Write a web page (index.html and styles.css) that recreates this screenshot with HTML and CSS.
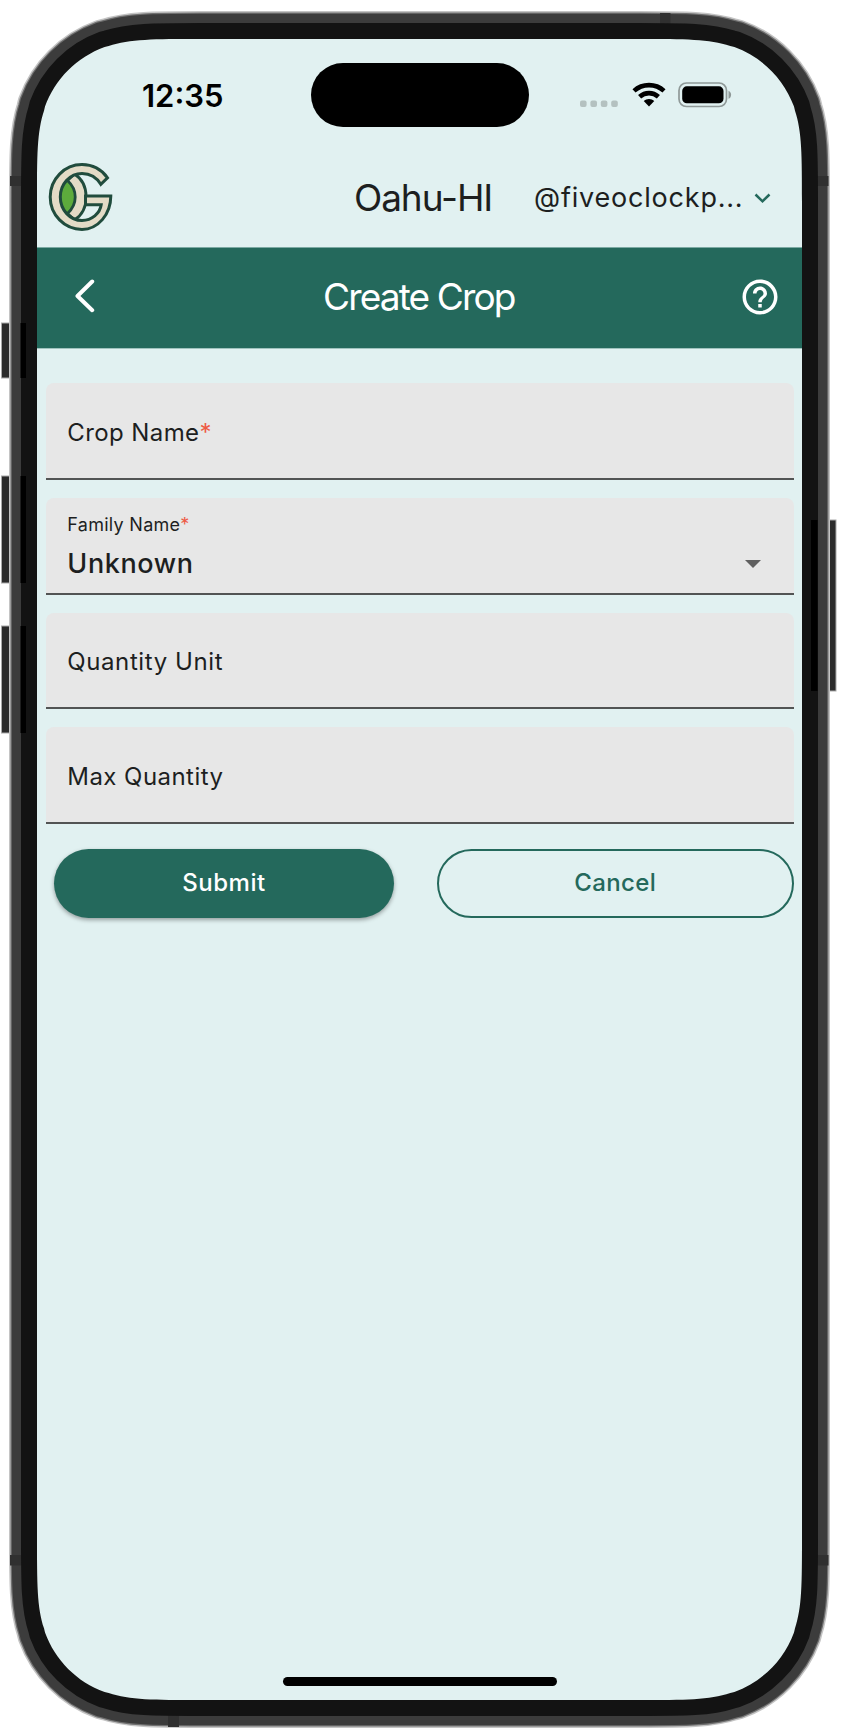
FILE: index.html
```html
<!DOCTYPE html>
<html lang="en">
<head>
<meta charset="utf-8">
<title>Create Crop</title>
<link rel="stylesheet" href="styles.css">
</head>
<body>
<div class="device">
  <svg class="frame" viewBox="0 0 849 1732" aria-hidden="true">
    <defs>
      <path id="outline" d="M0 163.6C0 116.5 0 92.9 7 71.7L8 67.6C18.1 39.9 39.9 18.1 67.6 8L71.7 7C92.9 0 116.5 0 163.6 0L601.4 0C648.5 0 672.1 0 693.3 7L697.4 8C725.1 18.1 746.9 39.9 757 67.6L758 71.7C765 92.9 765 116.5 765 163.6L765 1497.4C765 1544.5 765 1568.1 758 1589.3L757 1593.4C746.9 1621.1 725.1 1642.9 697.4 1653L693.3 1654C672.1 1661 648.5 1661 601.4 1661L163.6 1661C116.5 1661 92.9 1661 71.7 1654L67.6 1653C39.9 1642.9 18.1 1621.1 8 1593.4L7 1589.3C0 1568.1 0 1544.5 0 1497.4Z"/>
    </defs>
    <g class="side-buttons">
      <rect x="1.500" y="323" width="12" height="55"/>
      <rect x="1.500" y="476" width="12" height="107"/>
      <rect x="1.500" y="626" width="12" height="107"/>
      <rect x="824" y="520" width="12" height="171"/>
    </g>
    <g transform="translate(37 39)" fill="none">
      <use href="#outline" stroke="#c4c4c4" stroke-width="56"/>
      <use href="#outline" stroke="#707070" stroke-width="53"/>
      <use href="#outline" stroke="#3c3c3c" stroke-width="50.5"/>
    </g>
    <g fill="#303030">
      <rect x="10" y="176" width="12" height="10"/>
      <rect x="10" y="1555" width="12" height="10.5"/>
      <rect x="816" y="176" width="12.5" height="10"/>
      <rect x="816" y="1555" width="12.5" height="10.5"/>
      <rect x="660" y="13" width="10.5" height="12"/>
      <rect x="168" y="1715" width="11" height="12"/>
    </g>
    <use href="#outline" transform="translate(37 39)" fill="none" stroke="#131313" stroke-width="32"/>
    <g fill="#000">
      <rect x="20.5" y="323" width="5.5" height="55"/>
      <rect x="20.5" y="476" width="5.5" height="107"/>
      <rect x="20.5" y="626" width="5.5" height="107"/>
      <rect x="811" y="520" width="6.5" height="171"/>
    </g>
  </svg>

  <main class="screen">
    <div class="status">
      <span class="time">12:35</span>
      <span class="island"></span>
      <span class="signals">
        <svg width="40" height="8" viewBox="0 0 40 8" class="dots"><g fill="#b4c1c0"><rect x="0" y="0.5" width="6.6" height="6.6" rx="2"/><rect x="10.4" y="0.5" width="6.6" height="6.6" rx="2"/><rect x="20.8" y="0.5" width="6.6" height="6.6" rx="2"/><rect x="31.2" y="0.5" width="6.6" height="6.6" rx="2"/></g></svg>
        <svg width="34" height="26" viewBox="0 0 34 26" class="wifi"><g fill="none" stroke="#000" stroke-width="4.6"><path d="M2 8.9C10.5 1.2 23.5 1.2 32 8.9"/><path d="M7.6 14.8C13 9.9 21 9.9 26.4 14.8"/></g><path d="M11.7 19C14.7 16.3 19.3 16.3 22.3 19L17 24.5Z"/></svg>
        <svg width="55" height="26" viewBox="0 0 55 26" class="battery"><rect x="1" y="1" width="47.5" height="23.5" rx="7.5" fill="none" stroke="#8f9998" stroke-width="1.7"/><rect x="4.2" y="4.3" width="41.3" height="17" rx="4.6"/><path d="M50.5 8.7C54 10 54 15.5 50.5 16.8Z" fill="#8f9998"/></svg>
      </span>
    </div>

    <header class="topbar">
      <svg class="logo" width="66" height="70" viewBox="8 7 66 70">
        <path d="M27.5 25.5C18 34 18 50 27.5 58.5C37.8 49 37.8 35 27.5 25.5Z" fill="#5dab3c"/>
        <path d="M27.5 25.5C37.8 35 37.8 49 27.5 58.5L34.5 65C50 55 50 29 34.5 19Z" fill="#e3dbc6" stroke="#204c3d" stroke-width="2.8"/>
        <path d="M67.5 22.8A31.8 32.4 0 0 0 42 9.6A31.8 32.4 0 0 0 42 74.4A28.8 33.4 0 0 0 70.8 41H45.5V49.8H61.2A20 18 0 0 1 42 65.5A21.7 23.5 0 0 1 42 18.5A22.5 23.5 0 0 1 60.8 29.3Z" fill="#e3dbc6" stroke="#204c3d" stroke-width="3"/>
      </svg>
      <span class="place">Oahu-HI</span>
      <span class="account"><span class="user">@fiveoclockp...</span>
        <svg width="17" height="11" viewBox="0 0 17 11"><path d="M1.5 1.5L8.5 8.3L15.5 1.5" fill="none" stroke="#24695c" stroke-width="2.5"/></svg>
      </span>
    </header>

    <nav class="titlebar">
      <svg class="back" width="22" height="34" viewBox="0 0 22 34"><path d="M18.200 2.500L3.500 17L18.200 31.200" fill="none" stroke="#fff" stroke-width="4" stroke-linecap="round" stroke-linejoin="round"/></svg>
      <h1 class="title">Create Crop</h1>
      <svg class="help" width="42" height="42" viewBox="0 0 24 24" fill="#fff"><path d="M11 18h2v-2h-2v2zm1-16C6.480 2 2 6.480 2 12s4.480 10 10 10 10-4.480 10-10S17.520 2 12 2zm0 18c-4.410 0-8-3.590-8-8s3.590-8 8-8 8 3.590 8 8-3.590 8-8 8zm0-14c-2.210 0-4 1.790-4 4h2c0-1.100.9-2 2-2s2 .9 2 2c0 2-3 1.750-3 5h2c0-2.250 3-2.500 3-5 0-2.210-1.790-4-4-4z"/></svg>
    </nav>

    <form class="form">
      <div class="field"><label class="label crop">Crop Name<span class="req">*</span></label></div>
      <div class="field filled">
        <label class="mini">Family Name<span class="req">*</span></label>
        <div class="select"><span class="value">Unknown</span><span class="caret"></span></div>
      </div>
      <div class="field"><label class="label">Quantity Unit</label></div>
      <div class="field"><label class="label max">Max Quantity</label></div>
      <div class="actions">
        <button type="button" class="btn submit">Submit</button>
        <button type="button" class="btn cancel">Cancel</button>
      </div>
    </form>
    <div class="home"></div>
  </main>
</div>
</body>
</html>
```

FILE: styles.css
```css
* { box-sizing: border-box; }
body { margin: 0; background: #fff; font-family: Inter, "Liberation Sans", sans-serif; color: #1d1f1f; }
.device { position: relative; width: 849px; height: 1732px; padding: 39px 47px 32px 37px; overflow: hidden; }
.frame { position: absolute; left: 0; top: 0; width: 849px; height: 1732px; }
.side-buttons { fill: #2b2b2b; stroke: #aaa; stroke-width: 1; }
.screen {
  position: relative; width: 765px; height: 1661px; background: #e1f1f1;
  display: flex; flex-direction: column;
  clip-path: path("M0 163.6C0 116.5 0 92.9 7 71.7L8 67.6C18.1 39.9 39.9 18.1 67.6 8L71.7 7C92.9 0 116.5 0 163.6 0L601.4 0C648.5 0 672.1 0 693.3 7L697.4 8C725.1 18.1 746.9 39.9 757 67.6L758 71.7C765 92.9 765 116.5 765 163.6L765 1497.4C765 1544.5 765 1568.1 758 1589.3L757 1593.4C746.9 1621.1 725.1 1642.9 697.4 1653L693.3 1654C672.1 1661 648.5 1661 601.4 1661L163.6 1661C116.5 1661 92.9 1661 71.7 1654L67.6 1653C39.9 1642.9 18.1 1621.1 8 1593.4L7 1589.3C0 1568.1 0 1544.5 0 1497.4Z");
}
.status { height: 113px; flex: none; display: grid; grid-template-columns: 274px 218px 1fr; align-items: start; color: #000; }
.time { padding: 38px 0 0 105px; font-size: 31px; line-height: 38px; font-weight: 600; letter-spacing: 0; }
.island { margin-top: 24px; height: 64px; border-radius: 32px; background: #000; }
.signals { display: flex; padding: 43px 0 0 51px; }
.dots { margin-top: 17.5px; }
.wifi { margin-left: 11.5px; }
.battery { margin-left: 12px; }
.topbar { height: 95px; flex: none; display: grid; grid-template-columns: 317px 180px 1fr; align-items: start; }
.logo { margin: 10px 0 0 11px; overflow: visible; }
.place { margin-top: 23px; font-size: 37px; font-weight: 400; line-height: 46px; letter-spacing: -1.1px; white-space: nowrap; }
.account { margin-top: 29px; display: flex; align-items: center; gap: 11px; white-space: nowrap; }
.user { font-size: 27px; font-weight: 400; letter-spacing: 0.8px; line-height: 34px; }
.titlebar { height: 102px; flex: none; background: #24695c; display: grid; grid-template-columns: 286px 1fr 63px; align-items: center; color: #fff; border-top: 1px solid #7caaa3; border-bottom: 1px solid #a0c3be; }
.back { margin: 0 0 4px 37px; }
.title { margin: 0 0 2px; font-size: 37px; font-weight: 400; line-height: 46px; letter-spacing: -1.85px; white-space: nowrap; }
.help { margin: 0 0 3px; }
.form { padding: 34.3px 8.5px 0 9px; display: flex; flex-direction: column; gap: 18px; }
.field { height: 96.7px; border-bottom: 2px solid #525454; border-radius: 8px 8px 0 0; background: #e7e7e7; padding: 4px 0 0 21.3px; display: flex; align-items: center; }
.label { font-size: 24px; line-height: 30px; letter-spacing: 0.6px; }
.crop { letter-spacing: 0.4px; }
.max { letter-spacing: 0.45px; }
.req { color: #ee5a45; }
.filled { flex-direction: column; align-items: stretch; justify-content: flex-start; padding-top: 15px; }
.mini { font-size: 18px; line-height: 24px; letter-spacing: 0.28px; }
.select { display: flex; align-items: center; justify-content: space-between; padding: 10.5px 33px 0 0; }
.value { font-size: 27px; line-height: 34px; font-weight: 500; letter-spacing: 0.6px; }
.caret { width: 0; height: 0; border: 8.5px solid transparent; border-top-color: #606060; border-bottom: 0; }
.actions { display: grid; grid-template-columns: 340px 356.5px; justify-content: space-between; padding: 6.5px 0 0 8px; }
.btn { height: 69.5px; border-radius: 35px; font: 500 24px/30px Inter, sans-serif; letter-spacing: 0.5px; padding: 0; }
.submit { border: 0; background: #24695c; color: #fff; box-shadow: 0 2px 4px rgba(0,0,0,.35); }
.cancel { border: 2px solid #24695c; background: transparent; color: #24695c; letter-spacing: 0.35px; }
.home { width: 274px; height: 9px; border-radius: 5px; background: #000; margin: auto 0 14px 246px; flex: none; }
```
